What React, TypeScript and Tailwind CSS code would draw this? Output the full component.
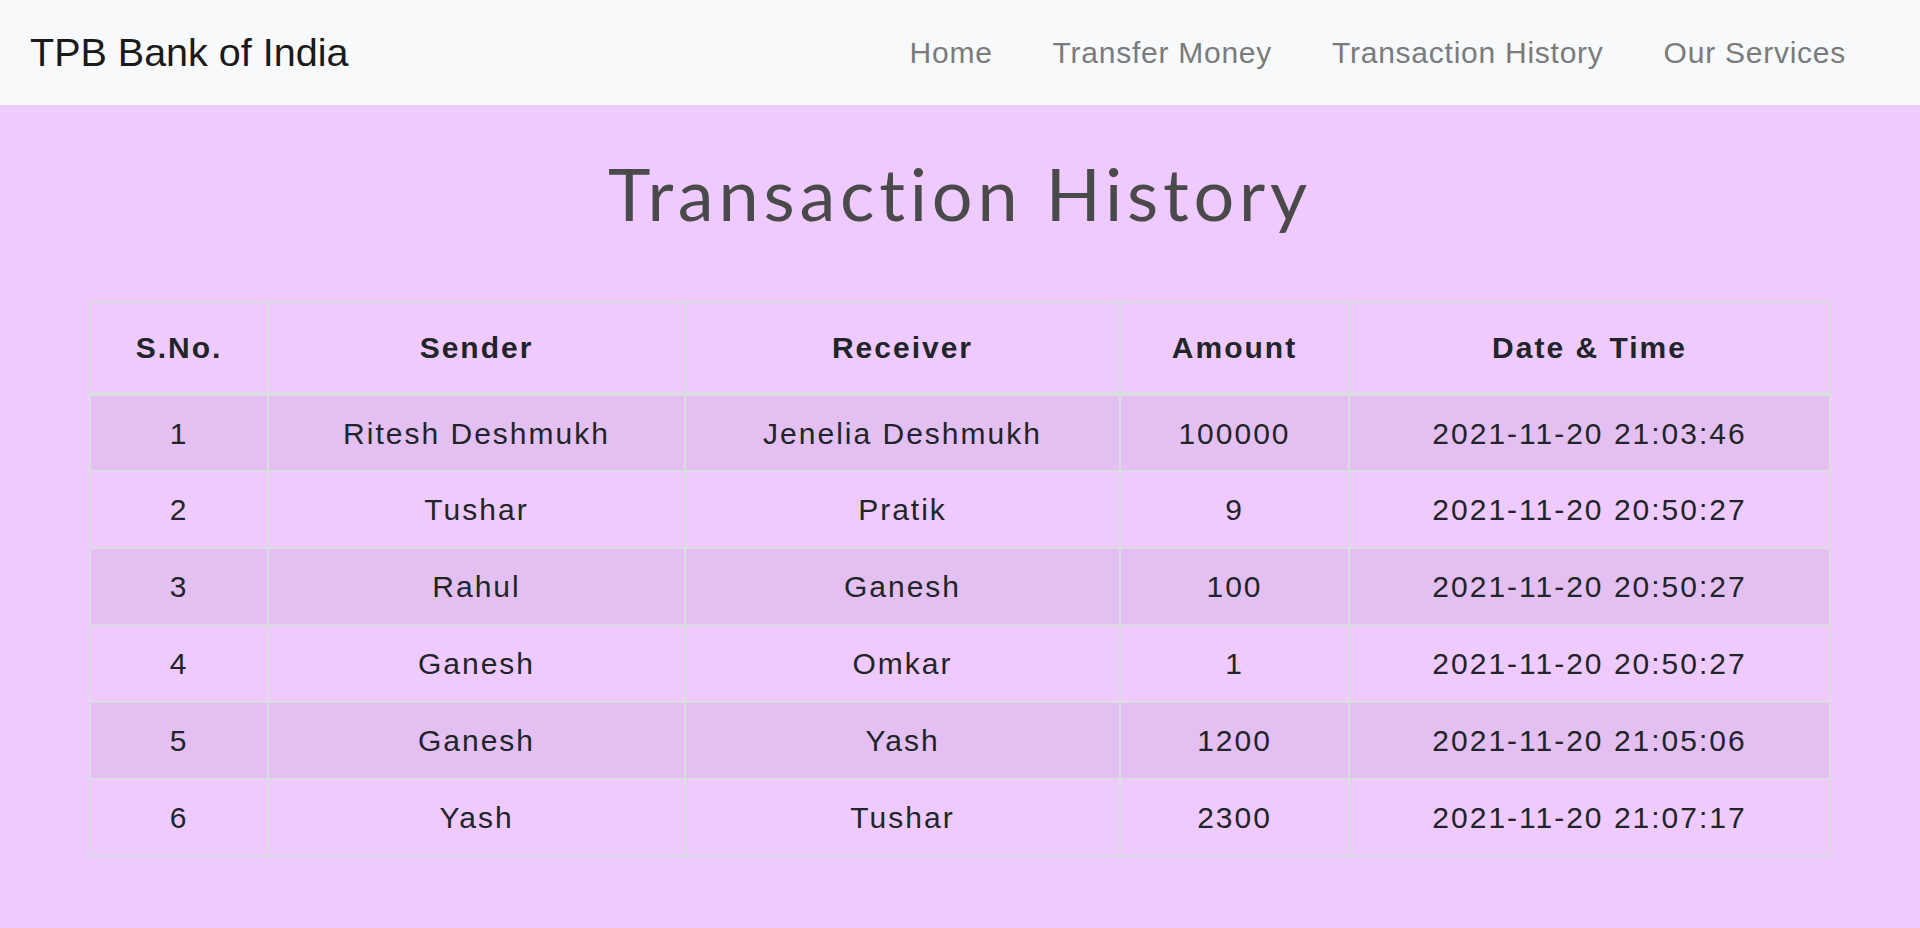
const links = ["Home", "Transfer Money", "Transaction History", "Our Services"];

const rows = [
  { id: 1, sender: "Ritesh Deshmukh", receiver: "Jenelia Deshmukh", amount: "100000", date: "2021-11-20 21:03:46" },
  { id: 2, sender: "Tushar", receiver: "Pratik", amount: "9", date: "2021-11-20 20:50:27" },
  { id: 3, sender: "Rahul", receiver: "Ganesh", amount: "100", date: "2021-11-20 20:50:27" },
  { id: 4, sender: "Ganesh", receiver: "Omkar", amount: "1", date: "2021-11-20 20:50:27" },
  { id: 5, sender: "Ganesh", receiver: "Yash", amount: "1200", date: "2021-11-20 21:05:06" },
  { id: 6, sender: "Yash", receiver: "Tushar", amount: "2300", date: "2021-11-20 21:07:17" },
];

const cell = "border-2 border-[#dcdde0] text-center align-middle";

export default function App() {
  return (
    <div className="min-h-screen bg-[#efcafe] font-['Liberation_Sans',Arial,sans-serif]">
      {/* Navbar */}
      <nav className="h-[105px] bg-[#f8f9fa] flex items-center justify-between pl-[30px] pr-[74px]">
        <a className="text-[39.5px] text-[#1a1a1a] leading-none">TPB Bank of India</a>
        <ul className="flex items-center gap-[60px]">
          {links.map((l) => (
            <li key={l} className="text-[30px] tracking-[0.75px] text-[#7a7b7c] leading-none">
              {l}
            </li>
          ))}
        </ul>
      </nav>

      {/* Title */}
      <h1 className="mt-[52px] text-center text-[72px] tracking-[4.8px] leading-none text-[#4a4a4a] font-['Lato',sans-serif]">
        Transaction History
      </h1>

      {/* Table */}
      <div className="mt-[72px] px-[89px]">
        <table className="w-full border-collapse table-fixed text-[30px] tracking-[2px] text-[#212529]">
          <thead>
            <tr className="h-[92px]">
              <th className={`${cell} w-[178px] border-b-4 font-bold`}>S.No.</th>
              <th className={`${cell} w-[417px] border-b-4 font-bold`}>Sender</th>
              <th className={`${cell} w-[435px] border-b-4 font-bold`}>Receiver</th>
              <th className={`${cell} w-[229px] border-b-4 font-bold`}>Amount</th>
              <th className={`${cell} border-b-4 font-bold`}>Date &amp; Time</th>
            </tr>
          </thead>
          <tbody>
            {rows.map((r, i) => (
              <tr key={r.id} className={i % 2 === 0 ? "h-[77px] bg-[#e3c0f1]" : "h-[77px]"}>
                <td className={cell}>{r.id}</td>
                <td className={cell}>{r.sender}</td>
                <td className={cell}>{r.receiver}</td>
                <td className={cell}>{r.amount}</td>
                <td className={cell}>{r.date}</td>
              </tr>
            ))}
          </tbody>
        </table>
      </div>
    </div>
  );
}
